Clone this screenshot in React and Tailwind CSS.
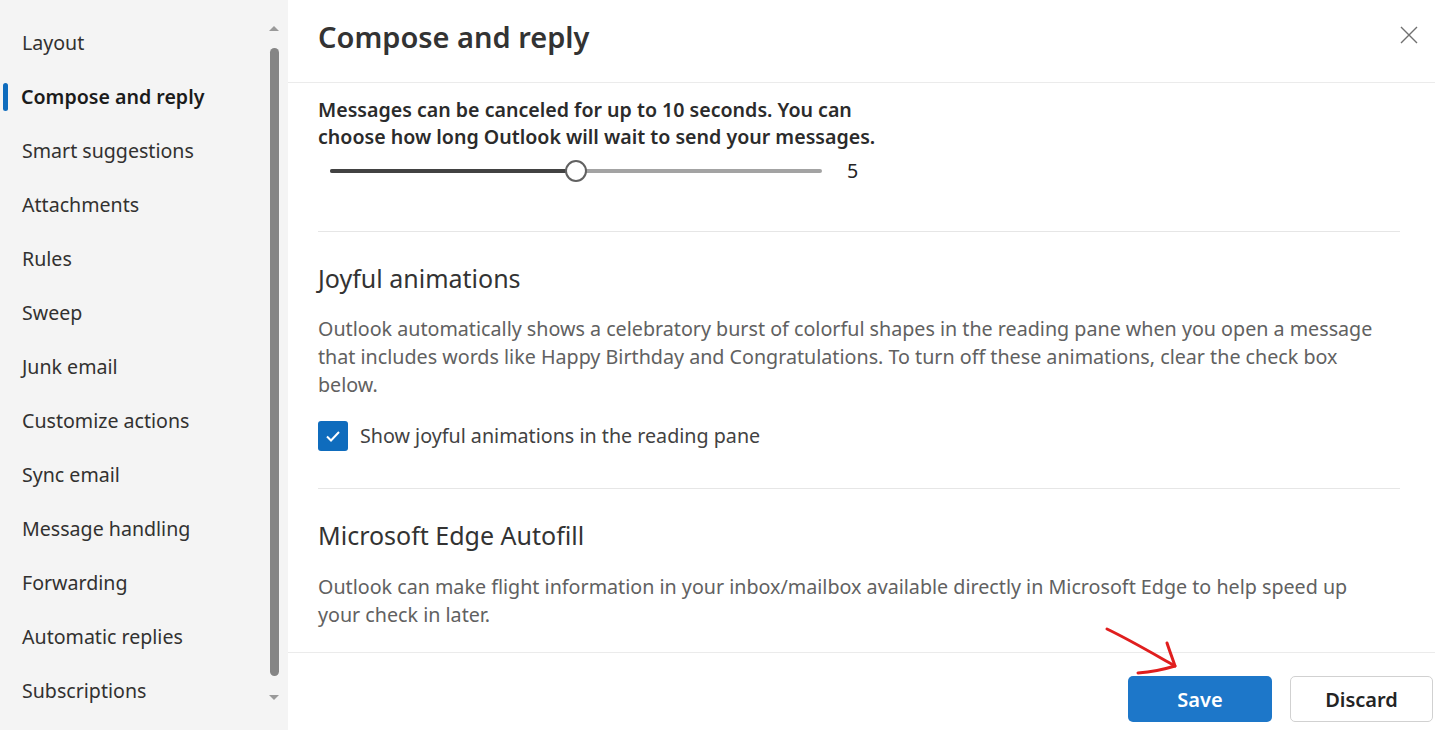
import React, { useState } from 'react';

const navItems = [
  'Layout',
  'Compose and reply',
  'Smart suggestions',
  'Attachments',
  'Rules',
  'Sweep',
  'Junk email',
  'Customize actions',
  'Sync email',
  'Message handling',
  'Forwarding',
  'Automatic replies',
  'Subscriptions',
];

const font = { fontFamily: '"Noto Sans", "Open Sans", sans-serif' };

const App = () => {
  const [active, setActive] = useState('Compose and reply');
  const [joyful, setJoyful] = useState(true);
  const delay = 5;

  return (
    <div className="w-[1435px] h-[730px] flex bg-white overflow-hidden relative" style={font}>
      {/* sidebar */}
      <div className="w-[288px] h-full bg-[#f4f4f4] flex">
        <div className="flex-1 pt-[16px]">
          {navItems.map((item) => (
            <div
              key={item}
              onClick={() => setActive(item)}
              className="relative h-[54px] flex items-center pl-[22px] cursor-pointer"
            >
              {active === item && (
                <span className="absolute left-[3px] top-[13px] w-[5px] h-[28px] rounded-full bg-[#0f6cbd]" />
              )}
              <span
                className={`text-[19.6px] ${active === item ? 'font-semibold text-[#1b1b1b] -ml-[1px]' : 'text-[#323130]'}`}
              >
                {item}
              </span>
            </div>
          ))}
        </div>
        <div className="w-[10px] mr-[9px] flex flex-col items-center pt-[26px]">
          <div className="w-0 h-0 border-l-[5px] border-r-[5px] border-b-[5px] border-l-transparent border-r-transparent border-b-[#9a9a9a]" />
          <div className="w-[9px] h-[628px] mt-[17px] rounded-full bg-[#858585]" />
          <div className="mt-[19px] w-0 h-0 border-l-[5px] border-r-[5px] border-t-[5px] border-l-transparent border-r-transparent border-t-[#9a9a9a]" />
        </div>
      </div>

      {/* main pane */}
      <div className="flex-1 flex flex-col h-full">
        <div className="h-[83px] shrink-0 border-b border-[#ebebeb] flex items-center justify-between pl-[30px] pr-[14px]">
          <h1 className="text-[29px] font-semibold text-[#333333] -mt-[8px]">Compose and reply</h1>
          <button className="w-[24px] h-[24px] flex items-center justify-center -mt-[12px]">
            <svg width="20" height="20" viewBox="0 0 20 20">
              <path d="M2 2 L18 18 M18 2 L2 18" stroke="#707070" strokeWidth="1.4" />
            </svg>
          </button>
        </div>

        <div className="flex-1 overflow-hidden pl-[30px] pr-[35px]">
          <div className="pt-[13px] pb-[49px] border-b border-[#e6e6e6]">
            <p className="text-[19.6px] font-semibold leading-[27px] text-[#2b2b2b] whitespace-nowrap">
              Messages can be canceled for up to 10 seconds. You can
              <br />
              choose how long Outlook will wait to send your messages.
            </p>
            <div className="flex items-center mt-[10px] h-[22px]">
              <div className="relative ml-[12px] w-[492px] h-[4px] rounded-full bg-[#a3a3a3]">
                <div
                  className="absolute left-0 top-0 h-full rounded-full bg-[#424242]"
                  style={{ width: `${(delay / 10) * 100}%` }}
                />
                <div
                  className="absolute top-1/2 w-[22px] h-[22px] -translate-x-1/2 -translate-y-1/2 rounded-full bg-white border-[2px] border-[#616161]"
                  style={{ left: `${(delay / 10) * 100}%` }}
                />
              </div>
              <span className="ml-[25px] text-[19.6px] text-[#242424]">{delay}</span>
            </div>
          </div>

          <div className="pt-[30px] pb-[37px] border-b border-[#e6e6e6]">
            <h2 className="text-[25px] font-normal text-[#333333] leading-[32px]">Joyful animations</h2>
            <p className="mt-[21px] text-[19.7px] leading-[28px] text-[#616161] whitespace-nowrap">
              Outlook automatically shows a celebratory burst of colorful shapes in the reading pane when you open a message
              <br />
              that includes words like Happy Birthday and Congratulations. To turn off these animations, clear the check box
              <br />
              below.
            </p>
            <label className="mt-[22px] flex items-center gap-[12px] cursor-pointer">
              <span
                onClick={() => setJoyful(!joyful)}
                className={`w-[30px] h-[30px] rounded-[3px] flex items-center justify-center ${joyful ? 'bg-[#0f6cbd]' : 'border border-[#616161]'}`}
              >
                {joyful && (
                  <svg width="18" height="18" viewBox="0 0 18 18">
                    <path d="M3 9.5 L7 13.5 L15 5" stroke="white" strokeWidth="2" fill="none" />
                  </svg>
                )}
              </span>
              <span className="text-[19.7px] text-[#424242]">Show joyful animations in the reading pane</span>
            </label>
          </div>

          <div className="pt-[30px]">
            <h2 className="text-[25px] font-normal text-[#333333] leading-[32px]">Microsoft Edge Autofill</h2>
            <p className="mt-[22px] text-[19.7px] leading-[28px] text-[#616161] whitespace-nowrap">
              Outlook can make flight information in your inbox/mailbox available directly in Microsoft Edge to help speed up
              <br />
              your check in later.
            </p>
          </div>
        </div>

        <div className="h-[78px] shrink-0 border-t border-[#ebebeb] flex items-start justify-end gap-[18px] pr-[2px] pt-[23px]">
          <button className="w-[144px] h-[46px] rounded-[5px] bg-[#1d77c9] text-white text-[20px] font-semibold pt-[2px]">
            Save
          </button>
          <button className="w-[143px] h-[46px] rounded-[5px] bg-white border border-[#d1d1d1] text-[#242424] text-[20px] font-semibold pt-[2px]">
            Discard
          </button>
        </div>
      </div>

      {/* red hand-drawn annotation arrow */}
      <svg className="absolute left-[1100px] top-[622px] pointer-events-none" width="90" height="56" viewBox="0 0 90 56">
        <path d="M7 7 C 30 18, 52 31, 75 44" stroke="#e01e1e" strokeWidth="3" fill="none" strokeLinecap="round" />
        <path d="M67 21 C 70 30, 73 38, 75 44 C 62 48, 50 50, 38 51" stroke="#e01e1e" strokeWidth="3" fill="none" strokeLinecap="round" strokeLinejoin="round" />
      </svg>
    </div>
  );
};

export default App;
